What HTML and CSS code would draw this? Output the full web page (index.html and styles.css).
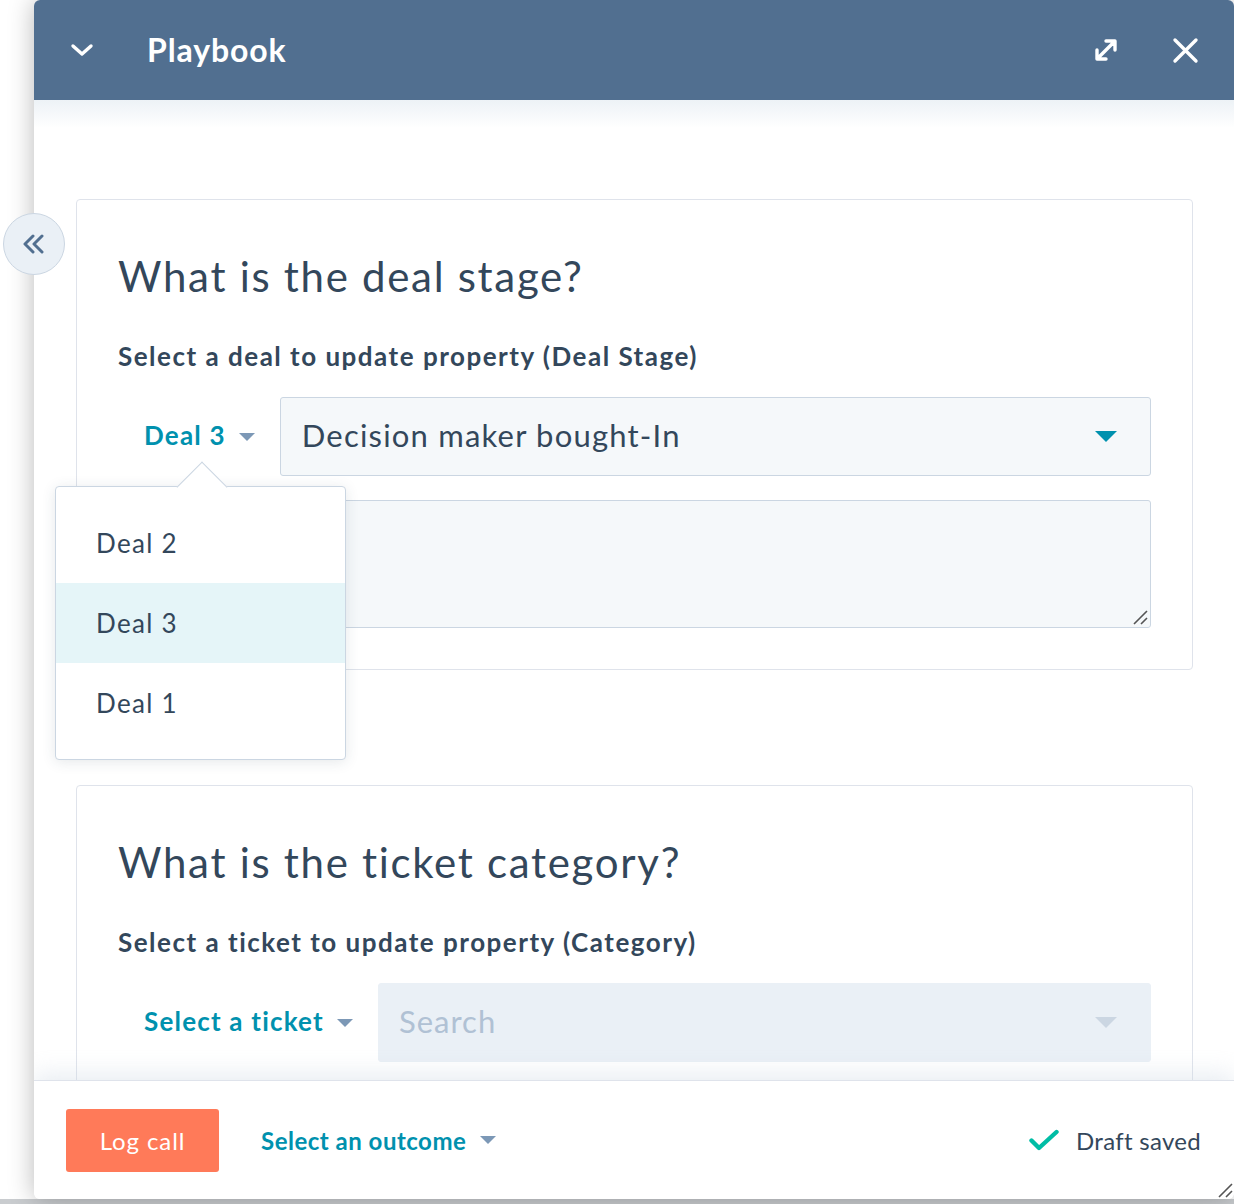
FILE: index.html
```html
<!DOCTYPE html>
<html lang="en">
<head>
<meta charset="utf-8">
<title>Playbook</title>
<link rel="stylesheet" href="styles.css">
</head>
<body>
<div class="stage">
  <div class="panel">
    <header class="header">
      <svg class="hdr-chevron" viewBox="0 0 24 14" width="24" height="14"><path d="M3 3 L12 11 L21 3" fill="none" stroke="#fff" stroke-width="3.4" stroke-linecap="round" stroke-linejoin="round"/></svg>
      <h1 class="hdr-title">Playbook</h1>
      <div class="hdr-actions">
        <svg class="hdr-icon" viewBox="0 0 26 26" width="26" height="26"><path d="M5 21 L21 5 M13 4 H22 V13 M4 13 V22 H13" fill="none" stroke="#fff" stroke-width="3.4" stroke-linecap="round" stroke-linejoin="round"/></svg>
        <svg class="hdr-icon" viewBox="0 0 27 27" width="27" height="27"><path d="M3 3 L24 24 M24 3 L3 24" fill="none" stroke="#fff" stroke-width="3.4" stroke-linecap="round"/></svg>
      </div>
    </header>

    <main class="content">
      <section class="card">
        <h2 class="q-title">What is the deal stage?</h2>
        <p class="q-label">Select a deal to update property (Deal Stage)</p>
        <div class="q-row">
          <div class="picker">
            <span class="picker-text">Deal 3</span><span class="caret-sm"></span>
            <div class="menu">
              <span class="menu-arrow"></span>
              <div class="menu-item">Deal 2</div>
              <div class="menu-item is-active">Deal 3</div>
              <div class="menu-item">Deal 1</div>
            </div>
          </div>
          <div class="select">
            <span class="select-value">Decision maker bought-In</span>
            <span class="caret-lg"></span>
          </div>
        </div>
        <div class="textarea">
          <svg class="resize" viewBox="0 0 16 16" width="16" height="16"><path d="M2 15 L15 2 M9 15 L15 9" stroke="#555" stroke-width="1.6" fill="none"/></svg>
        </div>
      </section>

      <section class="card">
        <h2 class="q-title">What is the ticket category?</h2>
        <p class="q-label">Select a ticket to update property (Category)</p>
        <div class="q-row">
          <div class="picker">
            <span class="picker-text">Select a ticket</span><span class="caret-sm"></span>
          </div>
          <div class="select is-search">
            <span class="select-value placeholder">Search</span>
            <span class="caret-lg muted"></span>
          </div>
        </div>
      </section>
    </main>

    <footer class="footer">
      <button class="btn-log">Log call</button>
      <div class="outcome"><span class="outcome-text">Select an outcome</span><span class="caret-sm"></span></div>
      <div class="draft">
        <svg class="check" viewBox="0 0 32 22" width="32" height="22"><path d="M3.5 11.5 L11 19 L28.5 3" fill="none" stroke="#00bda5" stroke-width="4.4" stroke-linecap="round" stroke-linejoin="round"/></svg>
        <span>Draft saved</span>
      </div>
      <svg class="resize resize-panel" viewBox="0 0 16 16" width="16" height="16"><path d="M2 15 L15 2 M9 15 L15 9" stroke="#555" stroke-width="1.6" fill="none"/></svg>
    </footer>
  </div>

  <button class="collapse" aria-label="Collapse">
    <svg viewBox="0 0 24 20" width="24" height="20"><path d="M11 2 L3 10 L11 18 M20 2 L12 10 L20 18" fill="none" stroke="#516f90" stroke-width="3" stroke-linecap="round" stroke-linejoin="round"/></svg>
  </button>
</div>
</body>
</html>
```

FILE: styles.css
```css
* { box-sizing: border-box; }

html, body {
  margin: 0;
  padding: 0;
  background: #fff;
}

body {
  font-family: Lato, "Open Sans", sans-serif;
  color: #33475b;
}

.stage {
  position: relative;
  width: 1234px;
  height: 1204px;
  overflow: hidden;
  padding-left: 34px;
  background: linear-gradient(to bottom, #fff 0, #fff 1199px, #c9cccf 1199px);
}

.panel {
  width: 1200px;
  height: 1199px;
  background: #fff;
  border-radius: 6px;
  box-shadow: 0 0 26px rgba(0, 0, 0, 0.28);
  display: flex;
  flex-direction: column;
  overflow: hidden;
}

/* Header */
.header {
  flex: none;
  height: 100px;
  background: #516f90;
  color: #fff;
  display: flex;
  align-items: center;
  padding: 0 35px 0 36px;
}

.hdr-chevron { display: block; flex: none; }

.hdr-title {
  flex: 1;
  margin: 0 0 0 53px;
  font-size: 32px;
  font-weight: 700;
  letter-spacing: 0.9px;
  line-height: 1;
}

.hdr-actions {
  display: flex;
  align-items: center;
  gap: 53px;
}

.hdr-icon { display: block; }

/* Content */
.content {
  flex: 1;
  overflow: hidden;
  padding: 99px 41px 0 42px;
  background: linear-gradient(#edf2f6 0, #fff 28px);
}

.card {
  border: 1px solid #dfe3eb;
  border-radius: 4px;
  background: #fff;
  padding: 52px 41px 41px;
}

.card + .card { margin-top: 115px; }

.q-title {
  margin: 0;
  font-size: 42px;
  line-height: 48px;
  font-weight: 400;
  letter-spacing: 1.7px;
  color: #33475b;
}

.q-label {
  margin: 41px 0 0;
  font-size: 26px;
  line-height: 30px;
  font-weight: 700;
  letter-spacing: 1.5px;
  color: #33475b;
}

.q-row {
  margin-top: 26px;
  display: flex;
  align-items: center;
}

.picker {
  position: relative;
  flex: none;
  display: flex;
  align-items: center;
  gap: 13px;
  padding: 0 25px 0 26px;
  height: 78px;
}

.picker-text,
.outcome-text {
  font-size: 26px;
  font-weight: 700;
  letter-spacing: 1.2px;
  color: #0091ae;
}

.picker-text { margin-bottom: 4px; }

.caret-sm {
  width: 0;
  height: 0;
  border-left: 8px solid transparent;
  border-right: 8px solid transparent;
  border-top: 8px solid #7c98b6;
}

.select {
  flex: 1;
  height: 79px;
  display: flex;
  align-items: center;
  justify-content: space-between;
  padding: 0 33px 0 21px;
  background: #f5f8fa;
  border: 1px solid #cbd6e2;
  border-radius: 3px;
}

.select-value {
  margin-bottom: 4px;
  font-size: 31px;
  letter-spacing: 1.2px;
  color: #33475b;
}

.caret-lg {
  width: 0;
  height: 0;
  border-left: 11px solid transparent;
  border-right: 11px solid transparent;
  border-top: 11px solid #0091ae;
}

.select.is-search {
  background: #eaf0f6;
  border-color: #eaf0f6;
  padding-left: 20px;
}

.placeholder {
  color: #b0c1d4;
  letter-spacing: 1px;
}

.caret-lg.muted { border-top-color: #cbd6e2; }

.textarea {
  position: relative;
  margin-top: 24px;
  height: 128px;
  background: #f5f8fa;
  border: 1px solid #cbd6e2;
  border-radius: 3px;
}

.resize {
  position: absolute;
  right: 2px;
  bottom: 2px;
  display: block;
}

/* Dropdown menu */
.menu {
  position: absolute;
  left: -63px;
  top: 88px;
  width: 291px;
  background: #fff;
  border: 1px solid #cbd6e2;
  border-radius: 4px;
  box-shadow: 0 2px 14px rgba(45, 62, 80, 0.12);
  padding: 16px 0 16px;
  z-index: 5;
}

.menu-arrow {
  position: absolute;
  left: 128px;
  top: -18px;
  width: 36px;
  height: 36px;
  background: #fff;
  border-top: 1px solid #cbd6e2;
  border-left: 1px solid #cbd6e2;
  transform: rotate(45deg);
}

.menu-item {
  position: relative;
  height: 80px;
  display: flex;
  align-items: center;
  padding-left: 40px;
  font-size: 26px;
  letter-spacing: 1.3px;
  color: #33475b;
}

.menu-item.is-active { background: #e5f5f8; }

/* Footer */
.footer {
  position: relative;
  z-index: 2;
  flex: none;
  height: 119px;
  border-top: 1px solid #dfe3eb;
  background: #fff;
  box-shadow: 0 -6px 22px rgba(203, 214, 226, 0.45);
  display: flex;
  align-items: center;
  padding: 0 33px 0 32px;
}

.btn-log {
  width: 153px;
  height: 63px;
  border: 0;
  border-radius: 3px;
  background: #ff7a59;
  color: #fff;
  font-family: inherit;
  font-size: 24px;
  font-weight: 400;
  letter-spacing: 0.9px;
}

.outcome {
  margin-left: 42px;
  display: flex;
  align-items: center;
  gap: 14px;
  flex: 1;
}

.outcome-text {
  font-size: 24px;
  letter-spacing: 0.5px;
}

.draft {
  display: flex;
  align-items: center;
  gap: 16px;
  font-size: 24px;
  letter-spacing: 0.3px;
  color: #33475b;
}

.check { display: block; }

.resize-panel {
  right: 1px;
  bottom: 1px;
}

/* Collapse button */
.collapse {
  position: absolute;
  left: 3px;
  top: 213px;
  width: 62px;
  height: 62px;
  padding: 0;
  border-radius: 50%;
  background: #eaf0f6;
  border: 1.5px solid #cbd6e2;
  display: flex;
  align-items: center;
  justify-content: center;
}

.collapse svg { display: block; }
```
